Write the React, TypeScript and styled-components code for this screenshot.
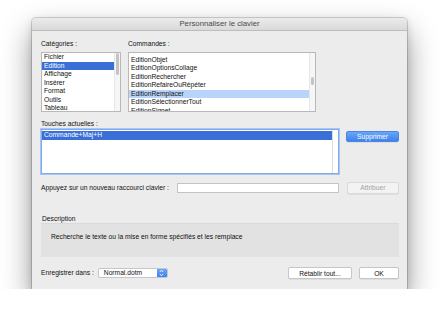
import { useLayoutEffect, useRef } from "react";
import styled, { createGlobalStyle } from "styled-components";

const GlobalStyle = createGlobalStyle`
  html, body {
    margin: 0;
    padding: 0;
    background: #ffffff;
  }
  body {
    font-family: "Liberation Sans", Arial, Helvetica, sans-serif;
    color: #111111;
  }
`;

// only the rows that show inside the list frames
const categories = [
  "Fichier",
  "Edition",
  "Affichage",
  "Insérer",
  "Format",
  "Outils",
  "Tableau",
];

const commands = [
  "EditionLiaisons",
  "EditionObjet",
  "EditionOptionsCollage",
  "EditionRechercher",
  "EditionRefaireOuRépéter",
  "EditionRemplacer",
  "EditionSélectionnerTout",
  "EditionSignet",
];

const ROW = 8.5;

const ScrolledItems = ({
  items,
  selected,
  scroll,
  tone,
}: {
  items: string[];
  selected: string;
  scroll: number;
  tone: "dark" | "light";
}) => {
  const ref = useRef<HTMLDivElement>(null);

  useLayoutEffect(() => {
    if (ref.current) ref.current.scrollTop = scroll;
  }, [scroll]);

  return (
    <Items ref={ref}>
      {items.map((item) => (
        <Item key={item} $selected={item === selected ? tone : undefined}>
          {item}
        </Item>
      ))}
    </Items>
  );
};

export default function App() {
  return (
    <>
      <GlobalStyle />
      <Window>
        <TitleBar>Personnaliser le clavier</TitleBar>
        <Body>
          <ListsRow>
            <Column $width={80}>
              <Label>Catégories :</Label>
              <ListBox>
                <ScrolledItems
                  items={categories}
                  selected="Edition"
                  scroll={0}
                  tone="dark"
                />
                <Track>
                  <Thumb $offset={0} $size={22} />
                </Track>
              </ListBox>
            </Column>
            <Column $width={188}>
              <Label>Commandes :</Label>
              <ListBox>
                <ScrolledItems
                  items={commands}
                  selected="EditionRemplacer"
                  scroll={6}
                  tone="light"
                />
                <Track>
                  <Thumb $offset={24} $size={8} />
                </Track>
              </ListBox>
            </Column>
          </ListsRow>

          <SectionLabel>Touches actuelles :</SectionLabel>
          <KeysRow>
            <KeysList>
              <Items>
                <Item $selected="dark">Commande+Maj+H</Item>
              </Items>
              <PlainTrack />
            </KeysList>
            <PushButton $variant="primary" $width={53}>
              Supprimer
            </PushButton>
          </KeysRow>

          <ShortcutRow>
            <Label>Appuyez sur un nouveau raccourci clavier :</Label>
            <TextField />
            <PushButton $variant="disabled" $width={53}>
              Attribuer
            </PushButton>
          </ShortcutRow>

          <DescriptionLabel>Description</DescriptionLabel>
          <DescriptionBox>
            Recherche le texte ou la mise en forme spécifiés et les remplace
          </DescriptionBox>

          <FooterRow>
            <Label>Enregistrer dans :</Label>
            <PopUp>
              <PopUpValue>Normal.dotm</PopUpValue>
              <Stepper>
                <svg width="5" height="8" viewBox="0 0 5 8">
                  <path
                    d="M0.8 3 L2.5 1.2 L4.2 3 M0.8 5 L2.5 6.8 L4.2 5"
                    fill="none"
                    stroke="#ffffff"
                    strokeWidth="0.9"
                  />
                </svg>
              </Stepper>
            </PopUp>
            <Spacer />
            <PushButton $variant="default" $width={64}>
              Rétablir tout...
            </PushButton>
            <PushButton $variant="default" $width={40}>
              OK
            </PushButton>
          </FooterRow>
        </Body>
      </Window>
    </>
  );
}

// Styled Components
const Window = styled.div`
  width: 375px;
  margin: 18px 0 0 32px;
  background: #ececec;
  border-radius: 4px 4px 0 0;
  box-shadow: 0 0 0 1px rgba(0, 0, 0, 0.16), 0 3px 8px rgba(0, 0, 0, 0.14),
    0 14px 30px rgba(0, 0, 0, 0.42);
`;

const TitleBar = styled.div`
  height: 12px;
  line-height: 12px;
  text-align: center;
  font-size: 7.75px;
  color: #4a4a4a;
  background: linear-gradient(#ebebeb, #d9d9d9);
  border-bottom: 1px solid #bdbdbd;
  border-radius: 4px 4px 0 0;
`;

const Body = styled.div`
  display: flex;
  flex-direction: column;
  padding: 9px 8px 10px 9px;
`;

const Label = styled.div`
  height: 8px;
  line-height: 8px;
  font-size: 6.7px;
  white-space: nowrap;
`;

const ListsRow = styled.div`
  display: flex;
  gap: 7px;
`;

const Column = styled.div<{ $width: number }>`
  display: flex;
  flex-direction: column;
  gap: 4px;
  width: ${(p) => p.$width}px;
`;

const ListBox = styled.div`
  display: flex;
  height: 60px;
  background: #ffffff;
  border: 1px solid #b8b8b8;
  box-sizing: border-box;
`;

const Items = styled.div`
  flex: 1;
  overflow: hidden;
`;

const Item = styled.div<{ $selected?: "dark" | "light" }>`
  height: ${ROW}px;
  line-height: ${ROW}px;
  padding-left: 2px;
  font-size: 6.7px;
  white-space: nowrap;
  background: ${(p) =>
    p.$selected === "dark"
      ? "#3a6fd7"
      : p.$selected === "light"
      ? "#b8d4fb"
      : "transparent"};
  color: ${(p) => (p.$selected === "dark" ? "#ffffff" : "#111111")};
`;

const Track = styled.div`
  display: flex;
  flex-direction: column;
  width: 5px;
  background: #f6f6f6;
  border-left: 1px solid #e6e6e6;
`;

const Thumb = styled.div<{ $offset: number; $size: number }>`
  width: 3px;
  margin: ${(p) => p.$offset}px 0 0 1px;
  height: ${(p) => p.$size}px;
  border-radius: 2px;
  background: #c4c4c4;
`;

const SectionLabel = styled(Label)`
  margin-top: 8px;
`;

const KeysRow = styled.div`
  display: flex;
  align-items: flex-start;
  gap: 7px;
  margin-top: 1px;
`;

const KeysList = styled.div`
  display: flex;
  width: 298px;
  height: 45px;
  box-sizing: border-box;
  background: #ffffff;
  border: 1px solid #7fa9ec;
  box-shadow: 0 0 0 1px #a9c6f3;
  padding-top: 1px;
`;

const PlainTrack = styled.div`
  width: 5px;
  margin-top: -1px;
  background: #ffffff;
  border-left: 1px solid #dddddd;
`;

const PushButton = styled.div<{
  $variant: "default" | "primary" | "disabled";
  $width: number;
}>`
  box-sizing: border-box;
  width: ${(p) => p.$width}px;
  height: ${(p) => (p.$variant === "primary" ? 11 : 12)}px;
  margin-top: ${(p) => (p.$variant === "primary" ? 2 : 0)}px;
  display: flex;
  align-items: center;
  justify-content: center;
  font-size: 6.7px;
  border-radius: 2px;
  white-space: nowrap;
  background: ${(p) =>
    p.$variant === "primary"
      ? "linear-gradient(#6aa5f8, #3d82ee)"
      : p.$variant === "disabled"
      ? "#f3f3f3"
      : "#ffffff"};
  color: ${(p) =>
    p.$variant === "primary"
      ? "#ffffff"
      : p.$variant === "disabled"
      ? "#a4a4a4"
      : "#111111"};
  border: 1px solid
    ${(p) =>
      p.$variant === "primary"
        ? "#4a86e4"
        : p.$variant === "disabled"
        ? "#dadada"
        : "#c6c6c6"};
  box-shadow: 0 0.5px 0.5px rgba(0, 0, 0, 0.12);
`;

const ShortcutRow = styled.div`
  display: flex;
  align-items: center;
  gap: 8px;
  margin-top: 8px;
  height: 11px;
`;

const TextField = styled.div`
  margin-left: auto;
  width: 164px;
  height: 10px;
  box-sizing: border-box;
  background: #ffffff;
  border: 1px solid #c4c4c4;
`;

const DescriptionLabel = styled(Label)`
  margin-top: 22px;
  padding-left: 1px;
`;

const DescriptionBox = styled.div`
  height: 34px;
  box-sizing: border-box;
  padding: 9px 0 0 10px;
  line-height: 8px;
  font-size: 6.7px;
  background: #e2e2e2;
  border-top: 1px solid #dadada;
`;

const FooterRow = styled.div`
  display: flex;
  align-items: center;
  gap: 7px;
  margin-top: 10px;
  height: 12px;
`;

const PopUp = styled.div`
  display: flex;
  width: 70px;
  height: 10px;
  margin-left: -3px;
  box-sizing: border-box;
  background: #ffffff;
  border: 1px solid #c6c6c6;
  border-radius: 2px;
  overflow: hidden;
`;

const PopUpValue = styled.div`
  flex: 1;
  padding-left: 5px;
  font-size: 6.7px;
  line-height: 8px;
`;

const Stepper = styled.div`
  width: 10px;
  display: flex;
  align-items: center;
  justify-content: center;
  background: linear-gradient(#6aa5f8, #3d82ee);
`;

const Spacer = styled.div`
  flex: 1;
`;
